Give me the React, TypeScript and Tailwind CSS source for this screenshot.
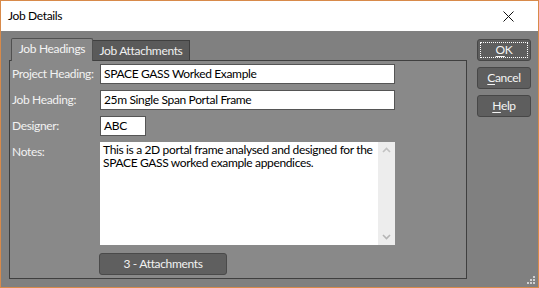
import * as React from "react"

const font = { fontFamily: 'Lato, "Segoe UI", sans-serif' }

function DlgButton({ label, rest, focus }: { label: string; rest: string; focus?: boolean }) {
  return (
    <button className="relative h-[22px] w-[54px] rounded-[3px] border border-[#474747] bg-[#5e5e5e] text-[12px] leading-none text-[#f4f4f4]">
      {focus && <span className="absolute inset-[2px] border border-dotted border-white" />}
      <span className="underline underline-offset-2">{label}</span>
      {rest}
    </button>
  )
}

function Field({ label, value, width }: { label: string; value: string; width: string }) {
  return (
    <div className="flex h-[20px] items-center">
      <span className="w-[88px] shrink-0 whitespace-nowrap text-[12px] text-[#f2f2f2]">{label}</span>
      <div className={`${width} flex h-[20px] items-center whitespace-nowrap border border-[#555] bg-white pl-[3px] text-[12px] text-black`}>
        {value}
      </div>
    </div>
  )
}

export default function App() {
  return (
    <div className="flex h-[288px] w-[539px] flex-col border border-[#d88a4a] bg-[#808080] tracking-[-0.35px]" style={font}>
      <div className="flex h-[30px] items-center justify-between bg-white pl-[7px] pr-[24px]">
        <span className="text-[12px] text-black">Job Details</span>
        <svg width="11" height="11" viewBox="0 0 11 11">
          <path d="M0.5 0.5 L10.5 10.5 M10.5 0.5 L0.5 10.5" stroke="#111" strokeWidth="1" />
        </svg>
      </div>

      <div className="relative flex flex-1 pl-[8px] pt-[7px]">
        <div className="flex w-[458px] flex-col">
          <div className="flex h-[22px] items-end pl-[2px]">
            <div className="relative z-10 -mb-px flex h-[23px] w-[82px] items-center justify-center whitespace-nowrap rounded-t-[2px] border border-b-0 border-[#505050] bg-[#898989] pb-[2px] text-[12px] text-[#f4f4f4]">
              Job Headings
            </div>
            <div className="flex h-[20px] w-[97px] items-center justify-center whitespace-nowrap border border-b-0 border-l-0 border-[#3f3f3f] bg-[#5a5a5a] text-[12px] text-[#f0f0f0]">
              Job Attachments
            </div>
          </div>
          <div className="flex h-[219px] flex-col gap-[6px] border border-[#3f3f3f] bg-[#898989] pl-[2px] pt-[3px]">
            <Field label="Project Heading:" value="SPACE GASS Worked Example" width="w-[295px]" />
            <Field label="Job Heading:" value="25m Single Span Portal Frame" width="w-[295px]" />
            <Field label="Designer:" value="ABC" width="w-[46px]" />
            <div className="flex">
              <span className="w-[88px] shrink-0 pt-[1px] text-[12px] text-[#f2f2f2]">Notes:</span>
              <div className="flex h-[103px] w-[295px] bg-white">
                <div className="flex-1 pl-[3px] pt-[1px] text-[12px] leading-[13px] text-black">
                  This is a 2D portal frame analysed and designed for the SPACE GASS worked example appendices.
                </div>
                <div className="flex w-[17px] flex-col items-center justify-between bg-[#ededed] py-[5px]">
                  <svg width="9" height="6" viewBox="0 0 9 6">
                    <path d="M1 5 L4.5 1.5 L8 5" stroke="#c2c2c2" strokeWidth="1.6" fill="none" />
                  </svg>
                  <svg width="9" height="6" viewBox="0 0 9 6">
                    <path d="M1 1 L4.5 4.5 L8 1" stroke="#b5b5b5" strokeWidth="1.6" fill="none" />
                  </svg>
                </div>
              </div>
            </div>
            <div className="flex pl-[87px] pt-[2px]">
              <button className="h-[22px] w-[128px] rounded-[3px] border border-[#4a4a4a] bg-[#5f5f5f] text-[12px] text-[#f2f2f2]">
                3 - Attachments
              </button>
            </div>
          </div>
        </div>

        <div className="ml-[10px] flex flex-col gap-[6px] pt-[1px]">
          <DlgButton label="O" rest="K" focus />
          <DlgButton label="C" rest="ancel" />
          <DlgButton label="H" rest="elp" />
        </div>

        <svg className="absolute bottom-[2px] right-[2px]" width="10" height="10" viewBox="0 0 10 10">
          <rect x="7" y="1" width="2" height="2" fill="#d0d0d0" />
          <rect x="4" y="4" width="2" height="2" fill="#d0d0d0" />
          <rect x="7" y="4" width="2" height="2" fill="#d0d0d0" />
          <rect x="1" y="7" width="2" height="2" fill="#d0d0d0" />
          <rect x="4" y="7" width="2" height="2" fill="#d0d0d0" />
          <rect x="7" y="7" width="2" height="2" fill="#d0d0d0" />
        </svg>
      </div>
    </div>
  )
}
